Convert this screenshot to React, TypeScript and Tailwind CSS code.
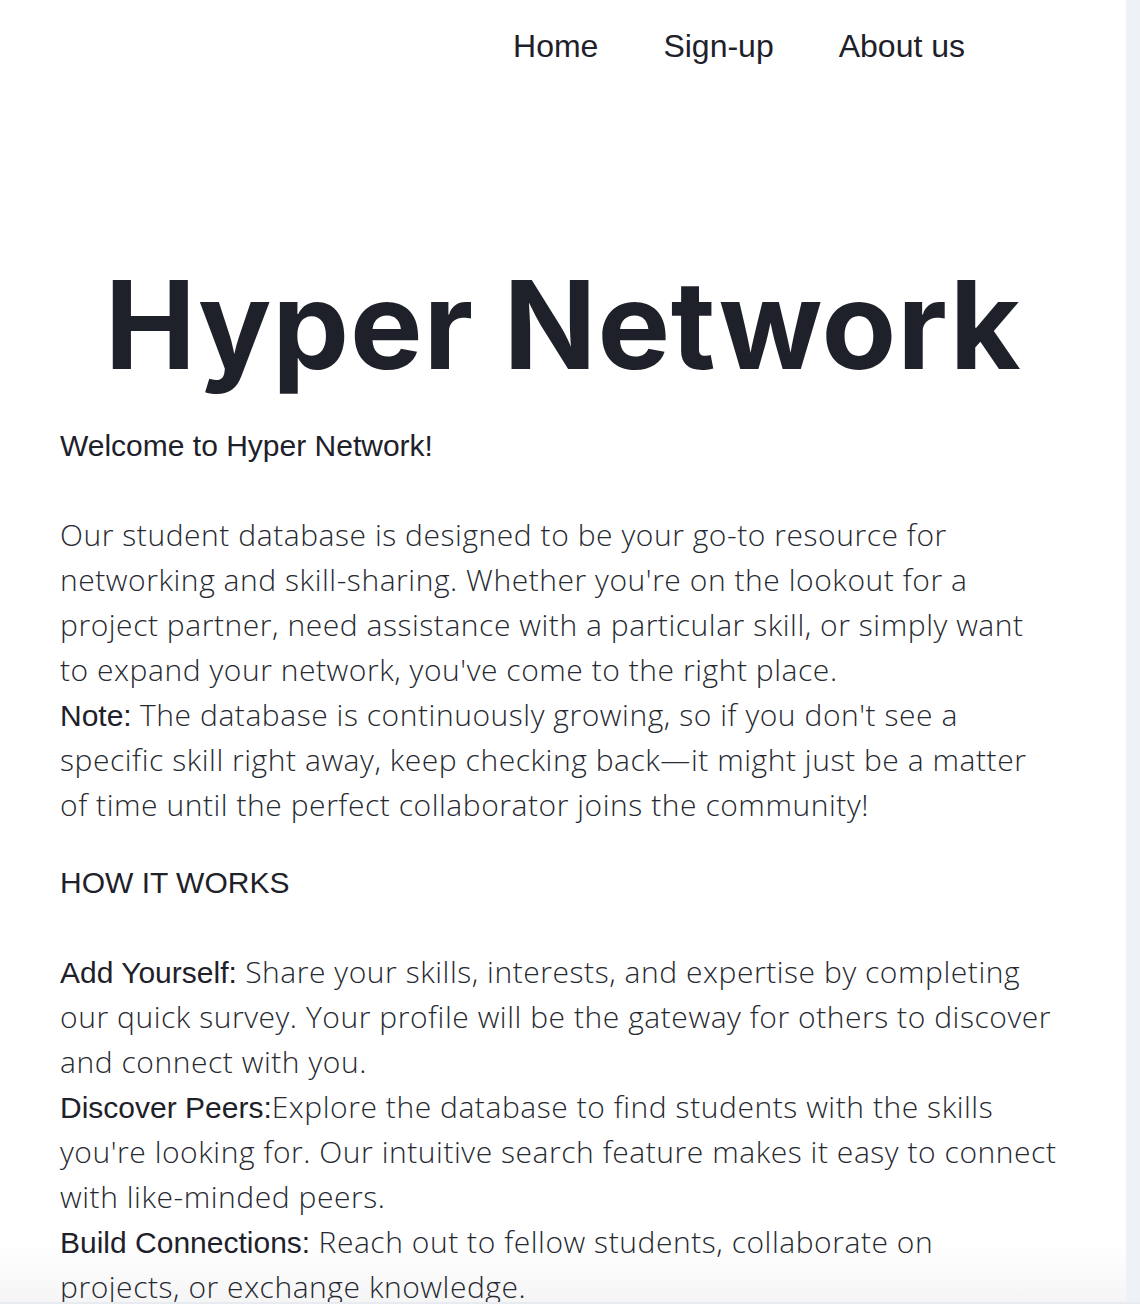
import React from 'react';

const Label: React.FC<{ children: React.ReactNode }> = ({ children }) => (
  <span className="font-['Liberation_Sans',Arial,sans-serif] font-normal leading-none tracking-normal text-[#1e212a]">
    {children}
  </span>
);

const App: React.FC = () => {
  return (
    <div className="relative flex h-[1304px] w-full overflow-hidden bg-white text-[#1e212a]">
      <div className="pointer-events-none absolute bottom-[2px] left-0 h-[60px] w-[1126px] bg-gradient-to-b from-white to-[#f5f5f5]" />
      <div className="relative w-[1126px] shrink-0">
        <nav className="flex justify-end gap-[65px] pr-[161px] pt-[22px] font-['Liberation_Sans',Arial,sans-serif] text-[32px] leading-[48px]">
          <a href="#">Home</a>
          <a href="#">Sign-up</a>
          <a href="#">About us</a>
        </nav>

        <h1 className="mt-[194px] text-center font-['Inter',sans-serif] text-[122px] font-bold leading-none tracking-[0.8px]">
          Hyper Network
        </h1>

        <div className="mt-[36px] pl-[60px] pr-[20px] font-['Open_Sans',sans-serif] text-[30px] font-light leading-[45px] tracking-[0.55px] text-[#262930]">
          <p>
            <Label>Welcome to Hyper Network!</Label>
            <br />
            <br />
            Our student database is designed to be your go-to resource for
            <br />
            networking and skill-sharing. Whether you're on the lookout for a
            <br />
            project partner, need assistance with a particular skill, or simply want
            <br />
            to expand your network, you've come to the right place.
            <br />
            <Label>Note:</Label> The database is continuously growing, so if you don't see a
            <br />
            specific skill right away, keep checking back—it might just be a matter
            <br />
            of time until the perfect collaborator joins the community!
          </p>

          <p className="mt-[32px]">
            <Label>HOW IT WORKS</Label>
            <br />
            <br />
            <Label>Add Yourself:</Label> Share your skills, interests, and expertise by completing
            <br />
            our quick survey. Your profile will be the gateway for others to discover
            <br />
            and connect with you.
            <br />
            <Label>Discover Peers:</Label>Explore the database to find students with the skills
            <br />
            you're looking for. Our intuitive search feature makes it easy to connect
            <br />
            with like-minded peers.
            <br />
            <Label>Build Connections:</Label> Reach out to fellow students, collaborate on
            <br />
            projects, or exchange knowledge.
          </p>
        </div>
      </div>
      <div className="flex-1 bg-[#eef1f6]" />
      <div className="absolute bottom-0 left-0 h-[2px] w-full bg-[#e8ebf0]" />
    </div>
  );
};

export default App;
